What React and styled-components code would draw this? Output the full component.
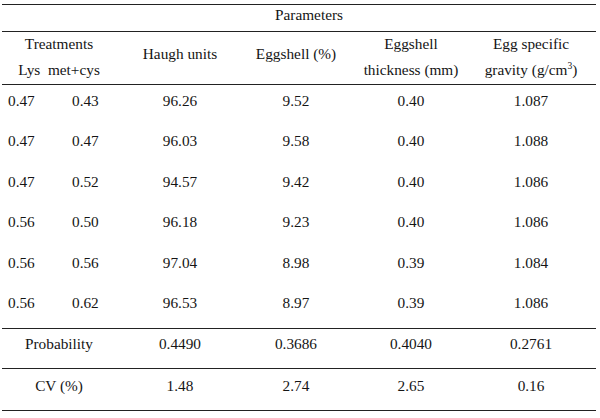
import React from "react";
import styled, { createGlobalStyle } from "styled-components";

const GlobalStyle = createGlobalStyle`
  html, body {
    margin: 0;
    padding: 0;
    background: #ffffff;
  }
  body {
    font-family: "Liberation Serif", "Times New Roman", serif;
    color: #1a1a1a;
  }
`;

const Page = styled.div`
  width: 600px;
  height: 418px;
  padding: 4px 4px 0 2px;
  box-sizing: border-box;
  background: #ffffff;
`;

const Table = styled.table`
  width: 594px;
  border-collapse: collapse;
  table-layout: fixed;
  font-family: "Liberation Serif", "Times New Roman", serif;
  font-size: 15.3px;
  color: #151515;
  border-top: 1px solid #222;
  border-bottom: 1px solid #222;
`;

const Row = styled.tr`
  height: ${(p) => p.$h}px;
  border-top: ${(p) => (p.$rule ? "1px solid #222" : "none")};
`;

const Cell = styled.td`
  padding: 0;
  padding-left: ${(p) => p.$pl || 0}px;
  padding-right: ${(p) => p.$pr || 0}px;
  padding-top: ${(p) => p.$pt || 0}px;
  text-align: ${(p) => p.$align || "center"};
  vertical-align: top;
  line-height: 18px;
  white-space: nowrap;
`;

const HeadLine = styled.div`
  height: ${(p) => p.$h}px;
  line-height: ${(p) => p.$h}px;
`;

const Sup = styled.sup`
  font-size: 9.5px;
  vertical-align: 6px;
  line-height: 0;
`;

const rows = [
  ["0.47", "0.43", "96.26", "9.52", "0.40", "1.087"],
  ["0.47", "0.47", "96.03", "9.58", "0.40", "1.088"],
  ["0.47", "0.52", "94.57", "9.42", "0.40", "1.086"],
  ["0.56", "0.50", "96.18", "9.23", "0.40", "1.086"],
  ["0.56", "0.56", "97.04", "8.98", "0.39", "1.084"],
  ["0.56", "0.62", "96.53", "8.97", "0.39", "1.086"],
];

const summary = [
  { label: "Probability", vals: ["0.4490", "0.3686", "0.4040", "0.2761"], h: 40, pt: 6 },
  { label: "CV (%)", vals: ["1.48", "2.74", "2.65", "0.16"], h: 42, pt: 8 },
];

function TwoLine({ top, bottom }) {
  return (
    <>
      <HeadLine $h={23}>{top}</HeadLine>
      <HeadLine $h={29}>{bottom}</HeadLine>
    </>
  );
}

export default function App() {
  return (
    <Page>
      <GlobalStyle />
      <Table>
        <colgroup>
          <col style={{ width: 64 }} />
          <col style={{ width: 50 }} />
          <col style={{ width: 128 }} />
          <col style={{ width: 104 }} />
          <col style={{ width: 126 }} />
          <col style={{ width: 122 }} />
        </colgroup>
        <tbody>
          <Row $h={27}>
            <Cell colSpan={2} />
            <Cell colSpan={4} $pt={1} $pr={94}>Parameters</Cell>
          </Row>
          <Row $h={53} $rule>
            <Cell colSpan={2}>
              <TwoLine top="Treatments" bottom={<>Lys&nbsp;&nbsp;met+cys</>} />
            </Cell>
            <Cell $pt={13}>Haugh units</Cell>
            <Cell $pt={13}>Eggshell (%)</Cell>
            <Cell>
              <TwoLine top="Eggshell" bottom="thickness (mm)" />
            </Cell>
            <Cell $pr={8}>
              <TwoLine
                top="Egg specific"
                bottom={<>gravity (g/cm<Sup>3</Sup>)</>}
              />
            </Cell>
          </Row>
          {rows.map((r, i) => (
            <Row key={i} $h={40.6} $rule={i === 0}>
              <Cell $align="left" $pl={6} $pt={7}>{r[0]}</Cell>
              <Cell $align="left" $pl={6} $pt={7}>{r[1]}</Cell>
              <Cell $pt={7}>{r[2]}</Cell>
              <Cell $pt={7}>{r[3]}</Cell>
              <Cell $pt={7}>{r[4]}</Cell>
              <Cell $pt={7} $pr={8}>{r[5]}</Cell>
            </Row>
          ))}
          {summary.map((s) => (
            <Row key={s.label} $h={s.h} $rule>
              <Cell colSpan={2} $pt={s.pt}>{s.label}</Cell>
              {s.vals.map((v, j) => (
                <Cell key={j} $pt={s.pt} $pr={j === 3 ? 8 : 0}>{v}</Cell>
              ))}
            </Row>
          ))}
        </tbody>
      </Table>
    </Page>
  );
}
